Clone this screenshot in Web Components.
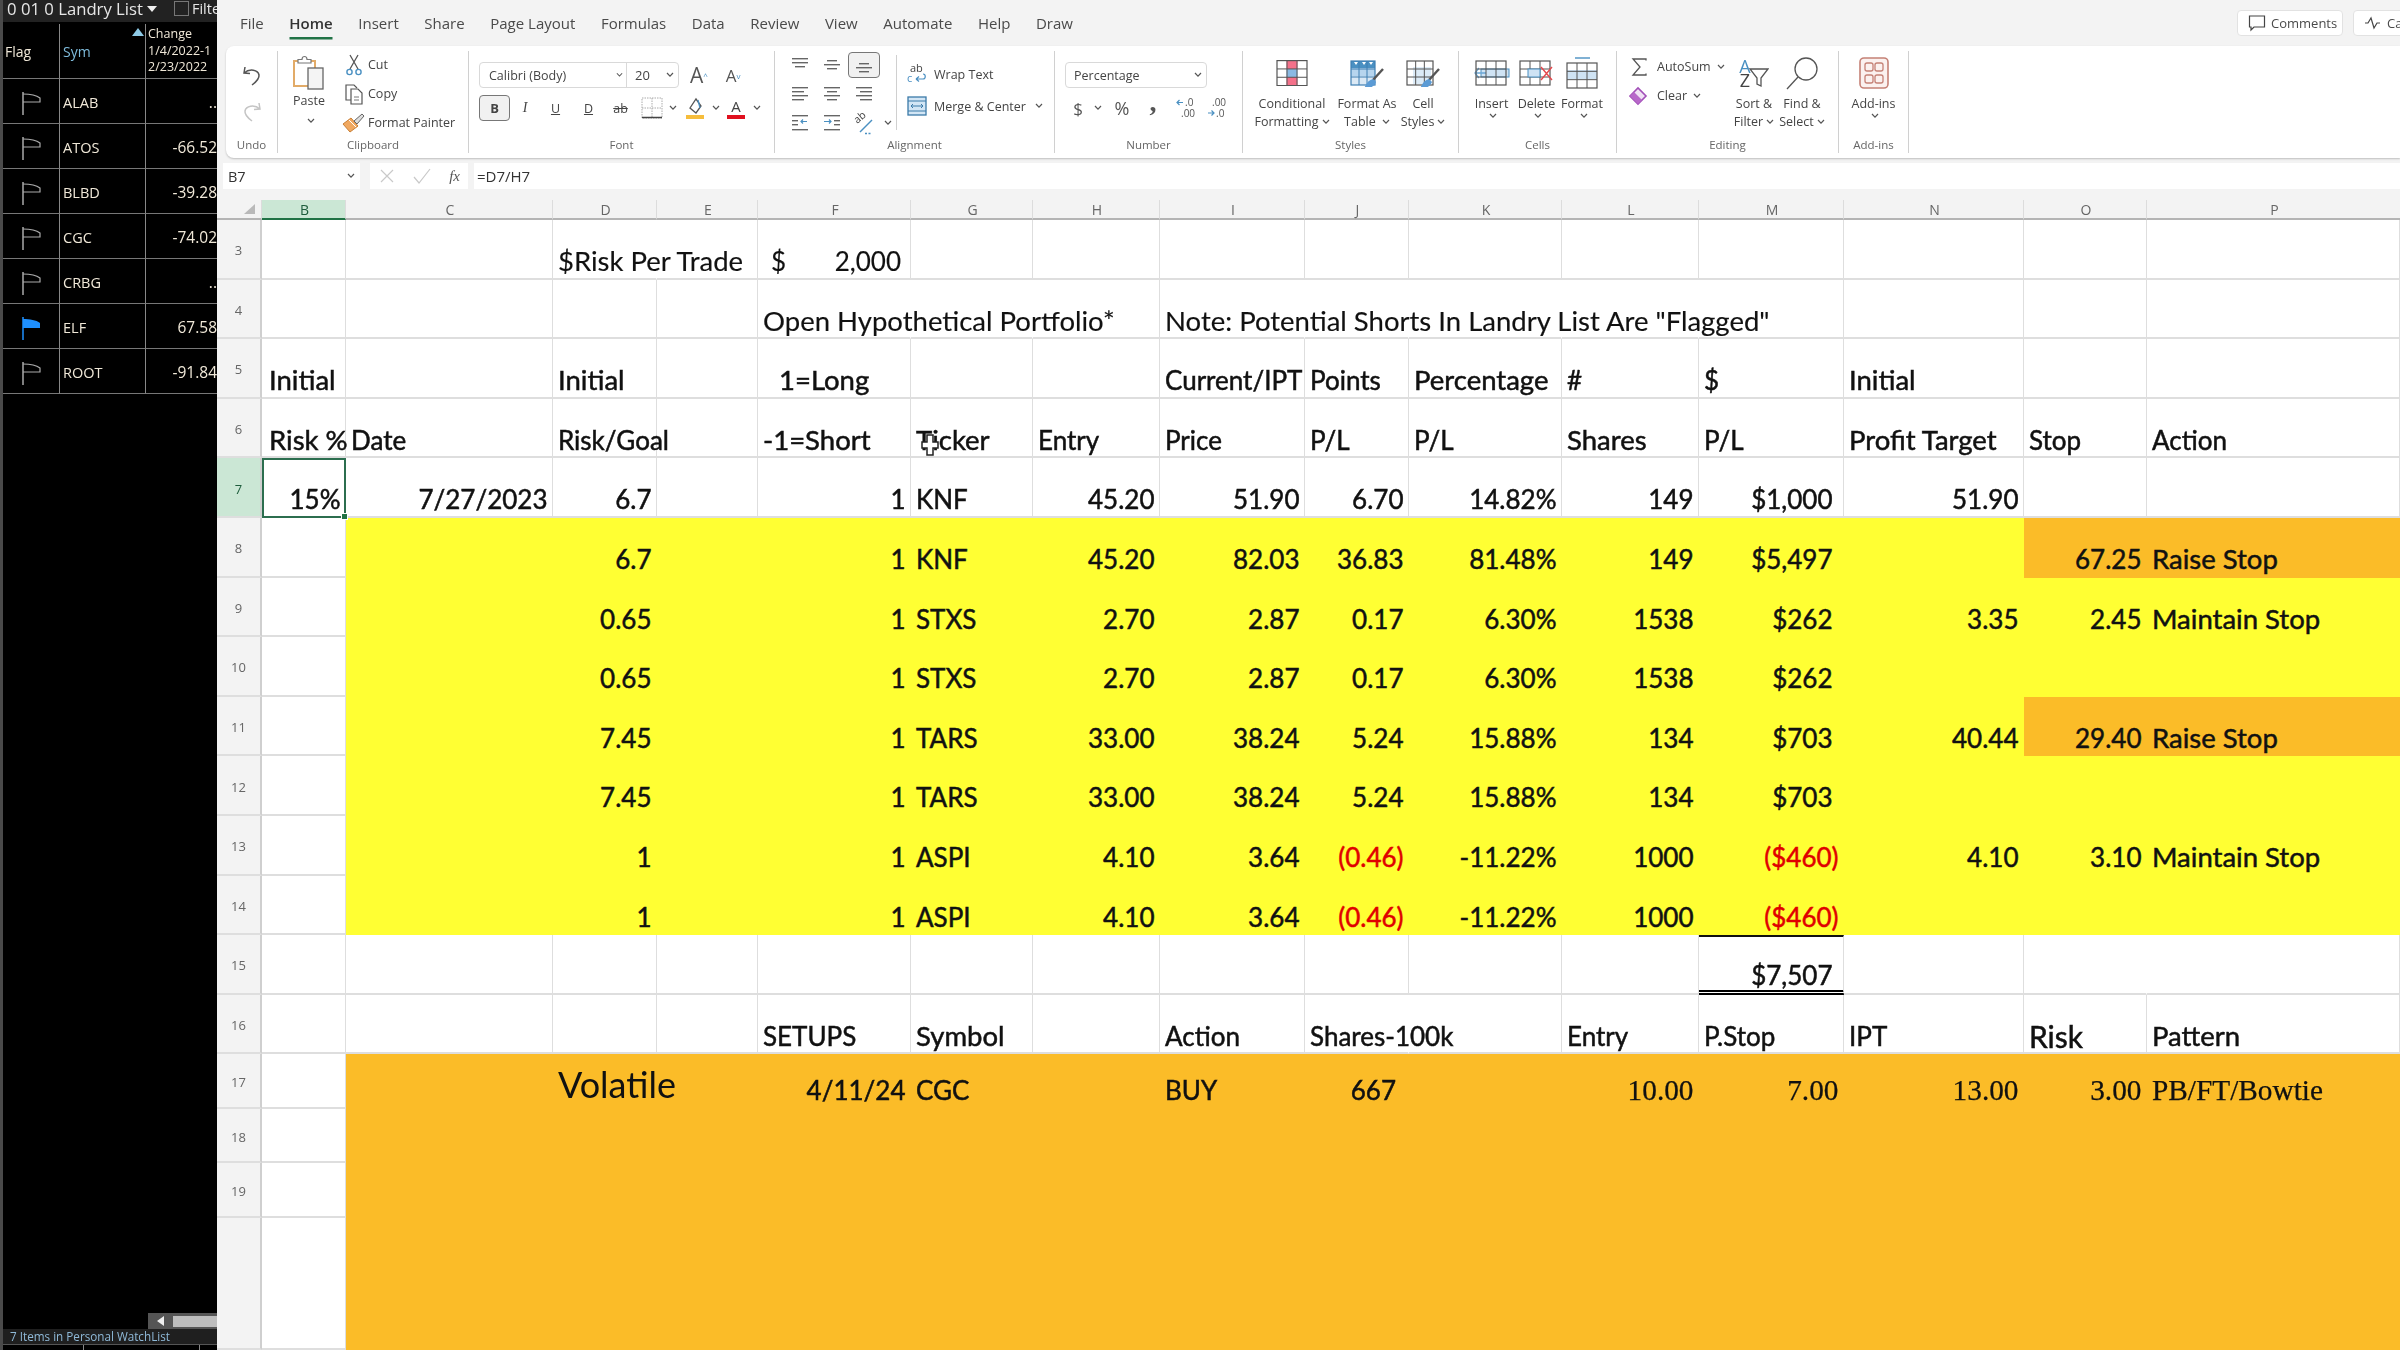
<!DOCTYPE html>
<html>
<head>
<meta charset="utf-8">
<title>Landry List</title>
<style>
    html, body { margin: 0; height: 100%; overflow: hidden; background: #f3f3f3; }
</style>
</head>
<body>
<excel-app></excel-app>
<script>
const chev = `<svg width="8" height="6" viewBox="0 0 8 6"><path d="M1 1l3 3.2L7 1" fill="none" stroke="#555" stroke-width="1.2"/></svg>`;

function bars(list, color = "#666") {
    return list.map(b => `<rect x="${b[0]}" y="${b[2]}" width="${b[1] - b[0]}" height="1.4" fill="${color}"/>`).join("");
}

function gridLines(x, y, w, h, cols, rows, color = "#555") {
    let out = `<rect x="${x}" y="${y}" width="${w}" height="${h}" fill="none" stroke="${color}" stroke-width="1.2"/>`;
    for (let i = 1; i < cols; i++) out += `<path d="M${x + i * w / cols} ${y}v${h}" stroke="${color}" stroke-width="1"/>`;
    for (let i = 1; i < rows; i++) out += `<path d="M${x} ${y + i * h / rows}h${w}" stroke="${color}" stroke-width="1"/>`;
    return out;
}

const brush = `<path d="M34 10L24 21" stroke="#555" stroke-width="2.4"/><path d="M24 20c-4 1-7 4-9 10 5 0 10-2 12-7z" fill="#5b9bd5"/>`;

const ICONS = {
    undo: [24, 24, `<path d="M5 4L4 10l6 .5M4 10c6-5 14-3 15 2 .6 4-3 7-7 10" fill="none" stroke="#555" stroke-width="1.5"/>`],
    redo: [24, 24, `<path d="M19 4l1 6-6 .5M20 10c-6-5-14-3-15 2-.6 4 3 7 7 10" fill="none" stroke="#c4c4c4" stroke-width="1.5"/>`],
    paste: [34, 36, `<path d="M7 6H2v25h17" fill="none" stroke="#e2ab68" stroke-width="2"/><path d="M18 6h5v7" fill="none" stroke="#e2ab68" stroke-width="2"/><path d="M6 8V4.500h4c0-4 5-4 5 0h4V8z" fill="#fff" stroke="#777" stroke-width="1.2"/><rect x="16" y="13" width="15" height="21" fill="#f4f4f4" stroke="#666" stroke-width="1.3"/>`],
    cut: [18, 22, `<path d="M5 1l8 14M13 1L5 15" fill="none" stroke="#555" stroke-width="1.3"/><circle cx="4.500" cy="18" r="2.600" fill="none" stroke="#4a90c2" stroke-width="1.4"/><circle cx="13.500" cy="18" r="2.600" fill="none" stroke="#4a90c2" stroke-width="1.4"/>`],
    copy: [20, 22, `<path d="M8 17H2V2h8l3 3" fill="none" stroke="#555" stroke-width="1.2"/><path d="M7 6h7l4 4v11H7z" fill="#fff" stroke="#555" stroke-width="1.2"/><path d="M10 14h5M10 17h5" stroke="#777"/>`],
    painter: [24, 20, `<path d="M1 11l8-6 7 8-8 6z" fill="#f0a860" stroke="#c97f35"/><path d="M7 7l7 7" stroke="#fff"/><path d="M12 8l8-7 2 2-7 8z" fill="#ddd" stroke="#666"/>`],
    borders: [22, 22, `<rect x="1" y="1" width="20" height="20" fill="none" stroke="#aaa" stroke-dasharray="1.500 1"/><path d="M11 1v20M1 11h20" stroke="#aaa" stroke-dasharray="1.500 1"/><path d="M1 20.500h20" stroke="#444" stroke-width="1.5"/>`],
    fill: [20, 24, `<path d="M5 12l6-9 5 7-5 7z" fill="#fff" stroke="#555" stroke-width="1.3"/><path d="M13 4l2 8" stroke="#4a90c2" stroke-width="1.3"/><rect x="1" y="19" width="18" height="4" fill="#f6bd3c"/>`],
    wrap: [20, 24, `<text x="3" y="10" font-size="11" fill="#444">ab</text><text x="0" y="20" font-size="11" fill="#4a8fc2">c</text><path d="M9 17h7c3 0 3-5 0-5M9 17l3-2.500M9 17l3 2.500" fill="none" stroke="#4a8fc2" stroke-width="1.200"/>`],
    merge: [20, 20, `<rect x="1" y="1" width="18" height="18" fill="#d3e6f5" stroke="#3b7aa8" stroke-width="1.3"/><path d="M1 5h18M1 15h18" stroke="#3b7aa8"/><path d="M4 10h12M6 8l-2 2 2 2M14 8l2 2-2 2" fill="none" stroke="#3b7aa8"/>`],
    orient: [22, 24, `<path d="M7 21l12-12" stroke="#4a90c2" stroke-width="1.500"/><path d="M12 22.500h7" stroke="#4a90c2" stroke-dasharray="2 1.500" stroke-width="1.500"/><text x="2" y="11" font-size="10.500" fill="#444" transform="rotate(-40 6 9)">ab</text>`],
    cond: [32, 26, `<rect x="10.500" y="0" width="11" height="9" fill="#f4718a"/><rect x="10.500" y="17" width="11" height="9" fill="#f4718a"/><rect x="10.500" y="9" width="11" height="8" fill="#8ab9e3"/>` + gridLines(1, .6, 30, 25, 3, 3)],
    table: [36, 28, `<rect x="2" y="2" width="24" height="7" fill="#4a90c2"/><rect x="2" y="9" width="24" height="8" fill="#b7d5ee"/><rect x="2" y="17" width="24" height="9" fill="#dbe9f5"/><path d="M5 3l2 3 2-3M13 3l2 3 2-3M20 3l2 3 2-3" fill="#fff"/>` + gridLines(2, 2, 24, 24, 3, 3, "#3f7fb2") + brush],
    styles: [36, 28, `<rect x="8" y="8" width="18" height="17" fill="#dcebf7"/>` + gridLines(2, 2, 26, 24, 3, 3, "#555") + brush],
    insert: [36, 26, `<rect x="7" y="9" width="28" height="8" fill="#cfe3f4" stroke="#4a90c2"/><path d="M12 13H1M5 8l-4 5 4 5" fill="none" stroke="#6aa7d6" stroke-width="1.300"/>` + gridLines(2, 1, 30, 24, 3, 3)],
    del: [36, 26, gridLines(1, 1, 30, 24, 3, 3) + `<rect x="9" y="9" width="12" height="8" fill="#cfe3f4" stroke="#4a90c2"/><path d="M22 7l11 13M33 7L22 20" stroke="#e5484d" stroke-width="1.400"/>`],
    format: [32, 32, `<rect x="1" y="13" width="30" height="9" fill="#cfe3f4"/><path d="M9 1h15" stroke="#4a90c2" stroke-width="1.400"/>` + gridLines(1, 6, 30, 25, 3, 3)],
    sigma: [20, 20, `<path d="M16 3.500V2H3l7 8-7 8h13v-1.500" fill="none" stroke="#555" stroke-width="1.300"/>`],
    clear: [22, 20, `<path d="M1 10l8-8 8 8-8 8z" fill="#f0e2f4" stroke="#a24fb8" stroke-width="1.600"/><path d="M1 10l4-4 8 8-4 4z" fill="#b768c9"/>`],
    sort: [34, 30, `<path d="M15 11h18l-7 9v8l-4-2v-6z" fill="none" stroke="#555" stroke-width="1.300"/>`],
    find: [34, 34, `<circle cx="21" cy="13" r="11" fill="none" stroke="#555" stroke-width="1.300"/><path d="M13 21L2 33" stroke="#555" stroke-width="1.300"/>`],
    addins: [30, 32, `<rect x="1" y="1" width="28" height="30" rx="4" fill="#fbf1ef" stroke="#c58176" stroke-width="1.600"/><rect x="6" y="6" width="8" height="8" rx="2" fill="none" stroke="#c58176" stroke-width="1.300"/><rect x="16" y="6" width="8" height="8" rx="2" fill="none" stroke="#c58176" stroke-width="1.300"/><rect x="6" y="18" width="8" height="8" rx="2" fill="none" stroke="#c58176" stroke-width="1.300"/><rect x="16" y="18" width="8" height="8" rx="2" fill="none" stroke="#c58176" stroke-width="1.300"/>`],
    comment: [18, 18, `<path d="M1.500 2h15v11H6l-3 3v-3H1.500z" fill="none" stroke="#444" stroke-width="1.200"/>`],
    pulse: [18, 14, `<path d="M1 7h3l3-5 3 10 3-5h3" fill="none" stroke="#444" stroke-width="1.200"/>`],
    x: [16, 16, `<path d="M2 2l12 12M14 2L2 14" stroke="#c9c9c9" stroke-width="1.200"/>`],
    check: [18, 16, `<path d="M1 9l5 6L17 1" fill="none" stroke="#c9c9c9" stroke-width="1.200"/>`],
    flag: [22, 24, `<path d="M2 1v23" stroke="#aaa" stroke-width="1.500"/><path d="M2 3c7 0 13 1 17 4v4H2" fill="none" stroke="#aaa" stroke-width="1.200"/>`],
    flagOn: [22, 24, `<path d="M2 1v23" stroke="#1e90ff" stroke-width="1.500"/><path d="M2 3c7 0 13 1 17 4v5H2z" fill="#1e90ff"/>`],
    corner: [14, 12, `<path d="M12 1v10H1z" fill="#b9b9b9"/>`],
    cursor: [18, 22, `<path d="M6 1h6v7h5v6h-5v7H6v-7H1V8h5z" fill="#fff" stroke="#222" stroke-width="1.500"/>`],
    alignTop: [24, 20, bars([[4, 20, 3], [4, 20, 7], [7, 17, 11]])],
    alignMid: [24, 20, bars([[7, 17, 5], [4, 20, 9], [7, 17, 13]])],
    alignBot: [24, 20, bars([[7, 17, 8], [4, 20, 12], [7, 17, 16]])],
    alignL: [24, 20, bars([[4, 20, 3], [4, 16, 7], [4, 20, 11], [4, 16, 15]])],
    alignC: [24, 20, bars([[4, 20, 3], [7, 17, 7], [4, 20, 11], [7, 17, 15]])],
    alignR: [24, 20, bars([[4, 20, 3], [8, 20, 7], [4, 20, 11], [8, 20, 15]])],
    outdent: [24, 20, bars([[4, 20, 2], [4, 10, 7], [4, 10, 11], [4, 20, 16]]) + `<path d="M19 8.500h-6M15 6.500l-2 2 2 2" fill="none" stroke="#4a90c2" stroke-width="1.200"/>`],
    indent: [24, 20, bars([[4, 20, 2], [14, 20, 7], [14, 20, 11], [4, 20, 16]]) + `<path d="M4 8.500h7M9 6.500l2 2-2 2" fill="none" stroke="#4a90c2" stroke-width="1.200"/>`],
    inc: [20, 22, `<path d="M7 5.500H1M3.500 3L1 5.500 3.500 8" fill="none" stroke="#4a90c2" stroke-width="1.200"/><text x="9" y="9" font-size="10" fill="#555">.0</text><text x="5" y="20" font-size="10" fill="#555">.00</text>`],
    dec: [20, 22, `<text x="5" y="9" font-size="10" fill="#555">.00</text><path d="M1 16h6M4.500 13.500L7 16l-2.500 2.500" fill="none" stroke="#4a90c2" stroke-width="1.200"/><text x="9" y="20" font-size="10" fill="#555">.0</text>`]
};

class RbIcon extends HTMLElement {
    constructor() {
        super();
        this.attachShadow({ mode: "open" });
    }

    connectedCallback() {
        const [w, h, body] = ICONS[this.getAttribute("name")];
        this.shadowRoot.innerHTML = `<style>:host { display: inline-flex; flex: none; } svg { display: block; font-family: "Open Sans", sans-serif; }</style>
            <svg width="${w}" height="${h}" viewBox="0 0 ${w} ${h}">${body}</svg>`;
    }
}

class RibbonGroup extends HTMLElement {
    constructor() {
        super();
        this.attachShadow({ mode: "open" }).innerHTML = `
            <style>
                :host { display: flex; flex-direction: column; flex: none; box-sizing: border-box; margin: 5px 0; border-right: 1px solid #d0d0d0; }
                .body { flex: 1; display: flex; min-height: 0; }
                .label { height: 18px; padding-top: 1px; box-sizing: border-box; text-align: center; font-size: 11.5px; line-height: 17px; color: #666; }
            </style>
            <div class="body"><slot></slot></div>
            <div class="label"></div>`;
    }

    connectedCallback() {
        this.shadowRoot.querySelector(".label").textContent = this.getAttribute("label");
    }
}

const ribbonTemplate = document.createElement("template");
ribbonTemplate.innerHTML = `
    <style>
        :host { display: flex; height: 112px; margin-left: 9px; background: #fff; border-radius: 8px 0 0 8px; box-shadow: 0 1px 2px rgba(0,0,0,.22); font: 12.5px "Open Sans", sans-serif; color: #444; white-space: nowrap; }
        .v { display: flex; flex-direction: column; align-items: center; }
        .h { display: flex; align-items: center; }
        .big { display: flex; flex-direction: column; align-items: center; flex: none; line-height: 18px; }
        .big .ico { height: 44px; display: flex; align-items: center; justify-content: center; }
        .big svg, .inl svg { display: inline-block; vertical-align: 1px; margin-left: 3px; }
        .cell { display: flex; align-items: center; justify-content: center; flex: none; height: 26px; }
        .combo { display: flex; align-items: center; box-sizing: border-box; height: 26px; border: 1px solid #d9d9d9; border-radius: 4px; background: #fff; }
        .press { background: #f1f1f1; border: 1px solid #777; border-radius: 4px; box-sizing: border-box; }
    </style>
    <ribbon-group label="Undo" style="width:52px">
        <div class="v" style="width:100%;padding-top:12px;gap:12px"><rb-icon name="undo"></rb-icon><rb-icon name="redo"></rb-icon></div>
    </ribbon-group>
    <ribbon-group label="Clipboard" style="width:191px">
        <div class="h" style="align-items:flex-start">
            <div class="big" style="width:62px;padding-top:4px"><rb-icon name="paste"></rb-icon><span style="margin-top:1px">Paste</span><span style="margin-top:2px">${chev}</span></div>
            <div class="v" style="align-items:flex-start;margin-top:-1px">
                <div class="h" style="height:29px"><span class="cell" style="width:28px"><rb-icon name="cut"></rb-icon></span>Cut</div>
                <div class="h" style="height:29px"><span class="cell" style="width:28px"><rb-icon name="copy"></rb-icon></span>Copy</div>
                <div class="h" style="height:29px"><span class="cell" style="width:28px"><rb-icon name="painter"></rb-icon></span>Format Painter</div>
            </div>
        </div>
    </ribbon-group>
    <ribbon-group label="Font" style="width:306px">
        <div class="v" style="align-items:flex-start;padding:11px 0 0 10px">
            <div class="h">
                <div class="combo" style="width:200px">
                    <span style="width:136px;padding-left:9px;box-sizing:border-box">Calibri (Body)</span>
                    <span class="cell" style="width:7px">${chev}</span>
                    <span style="width:1px;height:24px;background:#d9d9d9;margin-left:3px"></span>
                    <span style="width:39px;padding-left:8px;box-sizing:border-box;font-size:13px">20</span>
                    <span class="cell" style="width:8px">${chev}</span>
                </div>
                <span class="cell" style="width:34px;font-size:21px;color:#555;margin-left:3px">A<sup style="font-size:8px;color:#4a90c2">^</sup></span>
                <span class="cell" style="width:34px;font-size:17px;color:#555">A<sup style="font-size:8px;color:#4a90c2">v</sup></span>
            </div>
            <div class="h" style="margin-top:7px">
                <span class="cell press" style="width:31px;font-weight:700;font-size:13px">B</span>
                <span class="cell" style="width:30px;font:italic 14px 'Liberation Serif',serif">I</span>
                <span class="cell" style="width:31px;text-decoration:underline">U</span>
                <span class="cell" style="width:35px;text-decoration:underline">D</span>
                <span class="cell" style="width:29px;text-decoration:line-through">ab</span>
                <span class="cell" style="width:33px"><rb-icon name="borders"></rb-icon></span>
                <span class="cell" style="width:10px">${chev}</span>
                <span class="cell" style="width:33px"><rb-icon name="fill"></rb-icon></span>
                <span class="cell" style="width:9px">${chev}</span>
                <span class="cell" style="width:32px;flex-direction:column;font-size:15px;line-height:17px">A<span style="width:18px;height:4px;background:#e0101f"></span></span>
                <span class="cell" style="width:10px">${chev}</span>
            </div>
        </div>
    </ribbon-group>
    <ribbon-group label="Alignment" style="width:280px">
        <div class="h" style="align-items:flex-start;padding:1px 0 0 9px">
            <div style="display:grid;grid-template-columns:repeat(3,32px);grid-auto-rows:26px;row-gap:3px">
                <span class="cell"><rb-icon name="alignTop"></rb-icon></span>
                <span class="cell"><rb-icon name="alignMid"></rb-icon></span>
                <span class="cell press"><rb-icon name="alignBot"></rb-icon></span>
                <span class="cell"><rb-icon name="alignL"></rb-icon></span>
                <span class="cell"><rb-icon name="alignC"></rb-icon></span>
                <span class="cell"><rb-icon name="alignR"></rb-icon></span>
                <span class="cell"><rb-icon name="outdent"></rb-icon></span>
                <span class="cell"><rb-icon name="indent"></rb-icon></span>
                <span class="cell"><rb-icon name="orient"></rb-icon></span>
            </div>
            <span class="cell" style="width:16px;margin-top:58px">${chev}</span>
            <div class="v" style="align-items:flex-start;border-left:1px solid #d0d0d0;height:75px;margin-top:3px;padding-left:10px">
                <div class="h" style="height:32px;gap:7px;margin-top:3px"><span class="cell" style="width:20px"><rb-icon name="wrap"></rb-icon></span>Wrap Text</div>
                <div class="h" style="height:32px;gap:7px"><span class="cell" style="width:20px"><rb-icon name="merge"></rb-icon></span>Merge &amp; Center <span class="cell" style="width:12px">${chev}</span></div>
            </div>
        </div>
    </ribbon-group>
    <ribbon-group label="Number" style="width:188px">
        <div class="v" style="align-items:flex-start;padding:11px 0 0 10px">
            <div class="combo" style="width:142px;justify-content:space-between;padding:0 4px 0 8px">Percentage ${chev}</div>
            <div class="h" style="margin-top:7px;height:26px">
                <span class="cell" style="width:26px;font-size:17px;color:#555">$</span>
                <span class="cell" style="width:14px">${chev}</span>
                <span class="cell" style="width:34px;font-size:18px;color:#555">%</span>
                <span class="cell" style="width:28px;font:700 28px/20px 'Liberation Serif',serif;color:#555;padding-bottom:12px;box-sizing:border-box">,</span>
                <span class="cell" style="width:38px"><rb-icon name="inc"></rb-icon></span>
                <span class="cell" style="width:24px"><rb-icon name="dec"></rb-icon></span>
            </div>
        </div>
    </ribbon-group>
    <ribbon-group label="Styles" style="width:216px">
        <div class="h" style="align-items:flex-start;padding-left:9px">
            <div class="big" style="width:80px"><span class="ico"><rb-icon name="cond"></rb-icon></span>Conditional<span class="inl">Formatting${chev}</span></div>
            <div class="big" style="width:70px"><span class="ico"><rb-icon name="table"></rb-icon></span>Format As<span class="inl">Table ${chev}</span></div>
            <div class="big" style="width:42px"><span class="ico"><rb-icon name="styles"></rb-icon></span>Cell<span class="inl">Styles${chev}</span></div>
        </div>
    </ribbon-group>
    <ribbon-group label="Cells" style="width:158px">
        <div class="h" style="align-items:flex-start;padding-left:10px">
            <div class="big" style="width:45px"><span class="ico"><rb-icon name="insert"></rb-icon></span>Insert${chev}</div>
            <div class="big" style="width:45px"><span class="ico"><rb-icon name="del"></rb-icon></span>Delete${chev}</div>
            <div class="big" style="width:46px"><span class="ico"><rb-icon name="format"></rb-icon></span>Format${chev}</div>
        </div>
    </ribbon-group>
    <ribbon-group label="Editing" style="width:222px">
        <div class="h" style="align-items:flex-start">
            <div class="v" style="align-items:flex-start;width:113px;padding:1px 0 0 12px;box-sizing:border-box">
                <div class="h" style="height:29px;gap:6px"><span class="cell" style="width:22px"><rb-icon name="sigma"></rb-icon></span>AutoSum ${chev}</div>
                <div class="h" style="height:29px;gap:6px"><span class="cell" style="width:22px"><rb-icon name="clear"></rb-icon></span>Clear ${chev}</div>
            </div>
            <div class="big" style="width:48px">
                <span class="ico" style="font:18px/14px 'Open Sans',sans-serif"><span class="v" style="line-height:14px;margin-right:-16px"><span style="color:#4a90c2">A</span><span>Z</span></span><rb-icon name="sort"></rb-icon></span>
                Sort &amp;<span class="inl">Filter${chev}</span>
            </div>
            <div class="big" style="width:48px"><span class="ico"><rb-icon name="find"></rb-icon></span>Find &amp;<span class="inl">Select${chev}</span></div>
        </div>
    </ribbon-group>
    <ribbon-group label="Add-ins" style="width:70px">
        <div class="big" style="width:100%"><span class="ico"><rb-icon name="addins"></rb-icon></span>Add-ins${chev}</div>
    </ribbon-group>
`;

class RibbonBar extends HTMLElement {
    constructor() {
        super();
        this.attachShadow({ mode: "open" }).append(ribbonTemplate.content.cloneNode(true));
    }
}

class RibbonTabs extends HTMLElement {
    constructor() {
        super();
        const tabs = ["File", "Home", "Insert", "Share", "Page Layout", "Formulas", "Data", "Review", "View", "Automate", "Help", "Draw"];
        this.attachShadow({ mode: "open" }).innerHTML = `
            <style>
                :host { display: flex; align-items: center; box-sizing: border-box; height: 46px; padding-left: 23px; gap: 25.6px; font: 15px "Open Sans", sans-serif; color: #4a4a4a; overflow: hidden; white-space: nowrap; }
                .tab { position: relative; line-height: 28px; }
                .on { font-weight: 600; color: #333; box-shadow: 0 3px 0 -0.5px #217346; height: 28px; }
                .right { margin-left: auto; display: flex; gap: 10px; margin-right: -30px; font-size: 13px; }
                .btn { display: flex; align-items: center; gap: 5px; box-sizing: border-box; height: 26px; padding: 0 9px 0 10px; background: #fff; border: 1px solid #e2e2e2; border-radius: 4px; }
            </style>
            ${tabs.map(t => `<span class="tab ${t === "Home" ? "on" : ""}">${t}</span>`).join("")}
            <div class="right">
                <span class="btn" style="width:106px"><rb-icon name="comment"></rb-icon>Comments</span>
                <span class="btn" style="width:77px"><rb-icon name="pulse"></rb-icon>Catch up</span>
            </div>`;
    }
}

class FormulaBar extends HTMLElement {
    constructor() {
        super();
        this.attachShadow({ mode: "open" }).innerHTML = `
            <style>
                :host { display: flex; height: 26px; margin: 5px 0 11px 6px; gap: 10px; font: 14.5px "Open Sans", sans-serif; color: #333; }
                div { background: #fff; display: flex; align-items: center; box-sizing: border-box; }
                .name { width: 137px; padding: 0 5px; justify-content: space-between; }
                .fx { width: 98px; margin-right: -4px; padding: 0 8px 0 9px; justify-content: space-between; }
                .fx i { font: italic 15px "Liberation Serif", serif; color: #555; }
                .input { flex: 1; padding-left: 3px; font-size: 15px; }
            </style>
            <div class="name">B7 ${chev}</div>
            <div class="fx"><rb-icon name="x"></rb-icon><rb-icon name="check"></rb-icon><i>fx</i></div>
            <div class="input">=D7/H7</div>`;
    }
}

const COLS = ["B", "C", "D", "E", "F", "G", "H", "I", "J", "K", "L", "M", "N", "O", "P"];

// ">" in front of a value means right aligned, "!" means right aligned and red
const ROWS = {
    3: { D: "$Risk Per Trade" },
    4: { F: "Open Hypothetical Portfolio*", I: "Note: Potential Shorts In Landry List Are \"Flagged\"" },
    5: { B: "Initial", D: "Initial", F: "1=Long", I: "Current/IPT", J: "Points", K: "Percentage", L: "#", M: "$", N: "Initial" },
    6: { B: "Risk %", C: "Date", D: "Risk/Goal", F: "-1=Short", G: "Ticker", H: "Entry", I: "Price", J: "P/L", K: "P/L", L: "Shares", M: "P/L", N: "Profit Target", O: "Stop", P: "Action" },
    7: { B: ">15%", C: ">7/27/2023", D: ">6.7", F: ">1", G: "KNF", H: ">45.20", I: ">51.90", J: ">6.70", K: ">14.82%", L: ">149", M: ">$1,000", N: ">51.90" },
    8: { D: ">6.7", F: ">1", G: "KNF", H: ">45.20", I: ">82.03", J: ">36.83", K: ">81.48%", L: ">149", M: ">$5,497", O: ">67.25", P: "Raise Stop" },
    9: { D: ">0.65", F: ">1", G: "STXS", H: ">2.70", I: ">2.87", J: ">0.17", K: ">6.30%", L: ">1538", M: ">$262", N: ">3.35", O: ">2.45", P: "Maintain Stop" },
    10: { D: ">0.65", F: ">1", G: "STXS", H: ">2.70", I: ">2.87", J: ">0.17", K: ">6.30%", L: ">1538", M: ">$262" },
    11: { D: ">7.45", F: ">1", G: "TARS", H: ">33.00", I: ">38.24", J: ">5.24", K: ">15.88%", L: ">134", M: ">$703", N: ">40.44", O: ">29.40", P: "Raise Stop" },
    12: { D: ">7.45", F: ">1", G: "TARS", H: ">33.00", I: ">38.24", J: ">5.24", K: ">15.88%", L: ">134", M: ">$703" },
    13: { D: ">1", F: ">1", G: "ASPI", H: ">4.10", I: ">3.64", J: "!(0.46)", K: ">-11.22%", L: ">1000", M: "!($460)", N: ">4.10", O: ">3.10", P: "Maintain Stop" },
    14: { D: ">1", F: ">1", G: "ASPI", H: ">4.10", I: ">3.64", J: "!(0.46)", K: ">-11.22%", L: ">1000", M: "!($460)" },
    15: { M: ">$7,507" },
    16: { F: "SETUPS", G: "Symbol", I: "Action", J: "Shares-100k", L: "Entry", M: "P.Stop", N: "IPT", O: "Risk", P: "Pattern" },
    17: { D: "Volatile", F: ">4/11/24", G: "CGC", I: "BUY", J: ">667", L: ">10.00", M: ">7.00", N: ">13.00", O: ">3.00", P: "PB/FT/Bowtie" },
    18: {},
    19: {},
    20: {}
};

// gridlines that a spilling text hides, as row -> columns with no right border
const NO_RIGHT = { 3: "D", 4: "FGIJKL", 15: "O", 16: "J" };

// these keep the narrower size even though they hold lowercase letters
const NARROW = ["Risk/Goal", "Current/IPT", "Shares-100k", "Date", "Action", "Entry", "Price", "Stop", "Points", "P.Stop", "Volatile", "Risk"];

const sheetTemplate = document.createElement("template");
sheetTemplate.innerHTML = `
    <style>
        :host { display: grid; flex: 1; min-height: 0; overflow: hidden; background: #fff; font: 26px/30px Lato, sans-serif; color: #111;
            grid-template-columns: 45px 84px 207px 104px 101px 153px 122px 127px 145px 104px 153px 137px 145px 180px 123px 1fr;
            grid-template-rows: 20px repeat(14, 59.6px) repeat(3, 54.5px) 1fr; }
        .head, .num { display: flex; align-items: center; justify-content: center; background: #f3f3f3; box-sizing: border-box; font: 14px "Open Sans", sans-serif; color: #666; }
        .head { padding-left: 2px; border-right: 1px solid #dcdcdc; border-bottom: 2px solid #b4b4b4; }
        .head.last { border-right: 0; }
        .num { font-size: 13px; padding-top: 3px; border-right: 2px solid #cfcfcf; border-bottom: 2px solid #dedede; }
        .sel { background: #cbe7d5; color: #1d5c3c; }
        .head.sel { border-bottom-color: #217346; }
        .c { position: relative; display: flex; align-items: flex-end; box-sizing: border-box; min-width: 0; padding: 0 4.5px 1.5px 5px; white-space: nowrap; border-right: 1px solid #dedede; border-bottom: 2px solid #dedede; }
        .c.no-r { border-right-color: transparent; }
        .c.col-b { padding-left: 7px; }
        .r { justify-content: flex-end; }
        .wide { font-size: 27.5px; }
        .soft { -webkit-text-stroke: .15px #111; }
        .strong { -webkit-text-stroke: .5px #111; }
        .red { color: #e00000; -webkit-text-stroke-color: #e00000; }
        .yellow { background: #ffff33; border-color: #ffff33; }
        .orange { background: #fbbc28; border-color: #fbbc28; }
        .active { outline: 2px solid #2c6e4f; outline-offset: -2px; border-color: transparent; }
        .active::after { content: ""; position: absolute; right: -3px; bottom: -4px; width: 5px; height: 5px; background: #217346; border: 1px solid #fff; z-index: 2; }
        .pm { padding-right: 10.5px; }
        .sum { border-top: 2px solid #111; border-bottom: 5px double #000; padding-bottom: 0; }
        .serif { font: 29.3px/30px "Liberation Serif", serif; -webkit-text-stroke: .25px #111; }
        .big { font-size: 30px; }
        .volatile { font-size: 36px; -webkit-text-stroke: 0; padding-bottom: 8px; z-index: 1; }
        rb-icon.cur { position: absolute; left: 10px; bottom: 0; }
    </style>
`;

class SheetGrid extends HTMLElement {
    constructor() {
        super();
        const shadow = this.attachShadow({ mode: "open" });
        shadow.append(sheetTemplate.content.cloneNode(true));
        const box = document.createElement("template");
        box.innerHTML = this.buildCells();
        shadow.append(box.content);
    }

    buildCells() {
        let out = `<div class="head" style="justify-content:flex-end;padding-right:4px"><rb-icon name="corner"></rb-icon></div>`;
        out += COLS.map(c => `<div class="head ${c === "B" ? "sel" : ""} ${c === "P" ? "last" : ""}">${c}</div>`).join("");
        for (const n of Object.keys(ROWS).map(Number)) {
            out += `<div class="num ${n === 7 ? "sel" : ""}">${n < 20 ? n : ""}</div>`;
            out += COLS.map(col => this.buildCell(n, col)).join("");
        }
        return out;
    }

    buildCell(n, col) {
        let text = ROWS[n][col] || "";
        const cls = ["c"];
        let extra = "";
        if (text[0] === ">" || text[0] === "!") {
            cls.push("r");
            if (text[0] === "!") cls.push("red");
            text = text.slice(1);
        }
        cls.push(n >= 5 ? "strong" : "soft");
        if (col === "B") cls.push("col-b");
        if (/[a-z]{3,}/.test(text) && !NARROW.includes(text)) cls.push("wide");
        if ((NO_RIGHT[n] || "").includes(col)) cls.push("no-r");
        if (col !== "B") {
            const orangeRow = (n === 8 || n === 11) && (col === "O" || col === "P");
            if (n >= 17 || orangeRow) cls.push("orange");
            else if (n >= 8 && n <= 14) cls.push("yellow");
        }
        if (col === "M" && text && cls.includes("r") && !cls.includes("red") && n < 17) cls.push("pm");
        if (n === 15 && col === "M") cls.push("sum");
        if (n === 16 && col === "O") cls.push("big");
        if (n === 17 && ["L", "M", "N", "O", "P"].includes(col)) cls.push("serif");
        if (n === 17 && col === "D") cls.push("volatile");
        if (n === 7 && col === "B") cls.push("active");
        if (n === 3 && col === "F") {
            extra = `style="justify-content:space-between;padding:0 9px 1.5px 13px"`;
            return `<div class="${cls.join(" ")}" ${extra}><span>$</span><span>2,000</span></div>`;
        }
        if (n === 5 && col === "F") extra = `style="padding-left:21px"`;
        if (n === 17 && col === "J") extra = `style="padding-right:12px"`;
        const cursor = n === 6 && col === "G" ? `<rb-icon class="cur" name="cursor"></rb-icon>` : "";
        return `<div class="${cls.join(" ")}" ${extra}>${text}${cursor}</div>`;
    }
}

class WatchList extends HTMLElement {
    constructor() {
        super();
        const rows = [["ALAB", ".."], ["ATOS", "-66.52"], ["BLBD", "-39.28"], ["CGC", "-74.02"], ["CRBG", ".."], ["ELF", "67.58"], ["ROOT", "-91.84"]];
        this.attachShadow({ mode: "open" }).innerHTML = `
            <style>
                :host { display: flex; flex-direction: column; box-sizing: border-box; width: 217px; height: 100%; flex: none; overflow: hidden; background: #000; border-left: 3px solid #4a4a4a; color: #f0e8d8; font: 14px "Open Sans", sans-serif; white-space: nowrap; }
                .top { display: flex; align-items: center; box-sizing: border-box; height: 22px; margin-bottom: 2px; padding: 0 0 5px 4px; background: #222; color: #e6e6e6; font-size: 16.7px; line-height: 16px; }
                .top .tri { width: 0; height: 0; margin-left: 4px; border: 5px solid transparent; border-top: 6px solid #eee; border-bottom: 0; }
                .top .bar { width: 1px; height: 12px; margin: 0 10px 0 7px; background: #888; }
                .top .box { width: 13px; height: 13px; margin-right: 3px; border: 1px solid #777; flex: none; }
                .top .filter { font-size: 14.5px; }
                .grid { display: grid; grid-template-columns: 57px 86px 71px; grid-template-rows: 55px repeat(7, 45px); }
                .grid > div { display: flex; align-items: center; box-sizing: border-box; min-width: 0; overflow: hidden; border-right: 1px solid #888; border-bottom: 1px solid #777; }
                .grid > div:nth-child(3n) { border-right: 0; justify-content: flex-end; }
                .hflag { padding-left: 2px; }
                .hsym { position: relative; padding-left: 3px; color: #7fbcdc; }
                .hsym::after { content: ""; position: absolute; right: 1px; top: 4px; border: 6px solid transparent; border-top: 0; border-bottom: 8px solid #8ecae6; }
                .grid > .hchg { display: block; font-size: 12.5px; line-height: 16.5px; padding: 2px 0 0 2px; }
                .flag { justify-content: center; padding: 3px 0 0 2px; }
                .sym { padding: 2px 0 0 3px; font-size: 14.5px; }
                .grid > .val { font-size: 15.5px; padding-top: 2px; }
                .spacer { flex: 1; }
                .scroll { display: flex; justify-content: flex-end; }
                .track { display: flex; align-items: center; width: 69px; height: 16px; background: #555; padding-left: 9px; box-sizing: border-box; }
                .track i { width: 0; height: 0; border: 5px solid transparent; border-right: 7px solid #eee; border-left: 0; margin-right: 9px; }
                .track b { flex: 1; height: 11px; background: #bdbdbd; }
                .status { height: 15px; background: #1f1f1f; color: #8fb9d8; font-size: 11.7px; line-height: 15px; padding-left: 7px; }
                .foot { height: 5px; border-top: 1px solid #555; display: flex; }
                .foot span { width: 80px; border-right: 1px solid #888; }
            </style>
            <div class="top">0 01 0 Landry List<span class="tri"></span><span class="bar"></span><span class="box"></span><span class="filter">Filter</span></div>
            <div class="grid">
                <div class="hflag">Flag</div><div class="hsym">Sym</div><div class="hchg">Change<br>1/4/2022-1<br>2/23/2022</div>
                ${rows.map(r => `<div class="flag"><rb-icon name="${r[0] === "ELF" ? "flagOn" : "flag"}"></rb-icon></div><div class="sym">${r[0]}</div><div class="val">${r[1]}</div>`).join("")}
            </div>
            <div class="spacer"></div>
            <div class="scroll"><div class="track"><i></i><b></b></div></div>
            <div class="status">7 Items in Personal WatchList</div>
            <div class="foot"><span></span><span style="width:115px"></span></div>`;
    }
}

class ExcelApp extends HTMLElement {
    constructor() {
        super();
        this.attachShadow({ mode: "open" }).innerHTML = `
            <style>
                :host { display: flex; height: 1350px; width: 2400px; overflow: hidden; background: #f3f3f3; }
                main { flex: 1; min-width: 0; display: flex; flex-direction: column; filter: blur(.35px); }
                watch-list { filter: blur(.35px); }
            </style>
            <watch-list></watch-list>
            <main>
                <ribbon-tabs></ribbon-tabs>
                <ribbon-bar></ribbon-bar>
                <formula-bar></formula-bar>
                <sheet-grid></sheet-grid>
            </main>`;
    }
}

customElements.define("rb-icon", RbIcon);
customElements.define("ribbon-group", RibbonGroup);
customElements.define("ribbon-bar", RibbonBar);
customElements.define("ribbon-tabs", RibbonTabs);
customElements.define("formula-bar", FormulaBar);
customElements.define("sheet-grid", SheetGrid);
customElements.define("watch-list", WatchList);
customElements.define("excel-app", ExcelApp);
</script>
</body>
</html>
